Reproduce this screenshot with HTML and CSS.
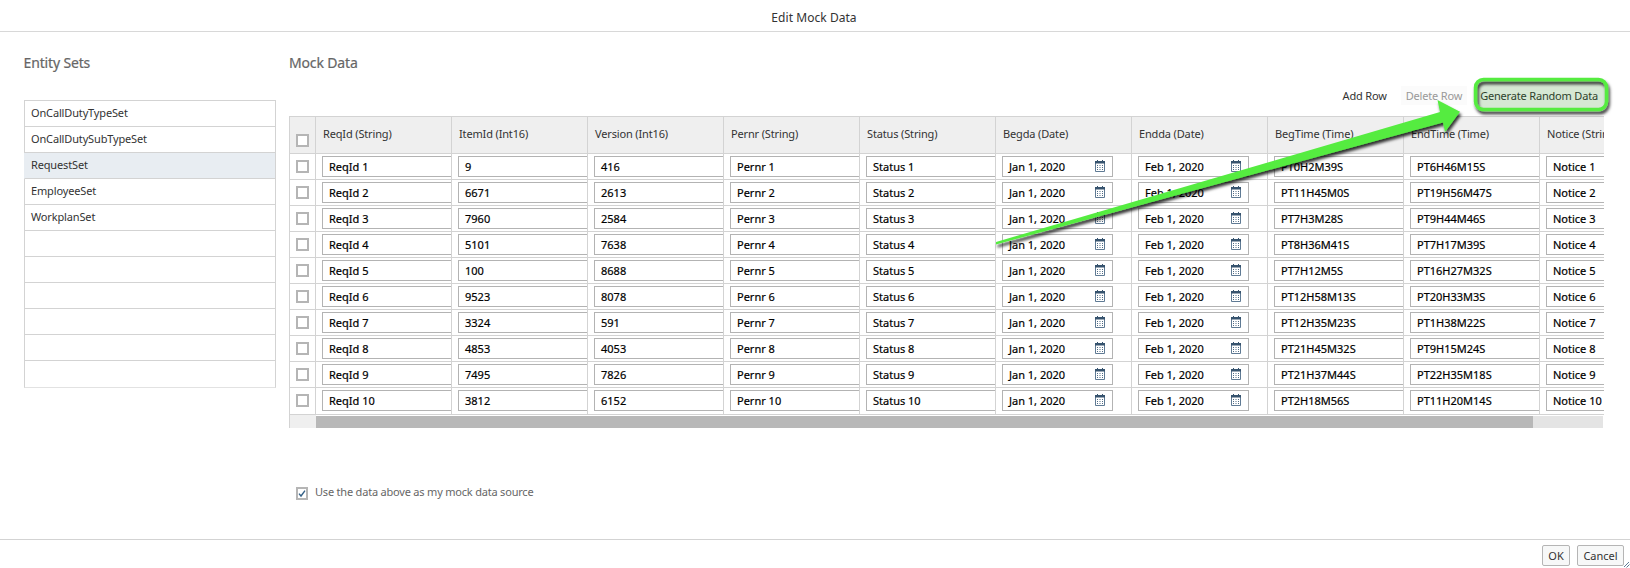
FILE: index.html
```html
<!DOCTYPE html>
<html lang="en">
<head>
<meta charset="utf-8">
<title>Edit Mock Data</title>
<link rel="stylesheet" href="styles.css">
</head>
<body>
<div class="dialog">
  <header class="titlebar"><h1 class="title">Edit Mock Data</h1></header>
  <main class="content">
    <section class="entities">
      <h2 class="heading">Entity Sets</h2>
      <ul class="list">
        <li>OnCallDutyTypeSet</li>
        <li>OnCallDutySubTypeSet</li>
        <li class="selected">RequestSet</li>
        <li>EmployeeSet</li>
        <li>WorkplanSet</li>
        <li></li><li></li><li></li><li></li><li></li><li></li>
      </ul>
    </section>
    <section class="mock">
      <h2 class="heading">Mock Data</h2>
      <div class="toolbar">
        <span class="tool">Add Row</span>
        <span class="tool disabled">Delete Row</span>
        <span class="tool generate">Generate Random Data</span>
      </div>
      <div class="table" id="table"></div>
      <div class="scroll"><div class="thumb"></div></div>
      <div class="source">
        <span class="check checked"><svg viewBox="0 0 8 9" width="8" height="9"><path d="M1 4.6 3 7 7 1.6" fill="none" stroke="#346187" stroke-width="1.4"/></svg></span>
        <span class="source-label">Use the data above as my mock data source</span>
      </div>
    </section>
  </main>
  <footer class="footer">
    <span class="button ok">OK</span>
    <span class="button cancel">Cancel</span>
  </footer>
  <svg class="grip" width="6" height="6" viewBox="0 0 6 6"><path d="M0 5 5 0M2.500 5.500 5.500 2.500" stroke="#5f7a94" stroke-width="1" fill="none"/></svg>
  <svg class="annotation" width="1630" height="568" viewBox="0 0 1630 568">
    <defs><filter id="shadow" x="-10%" y="-20%" width="120%" height="150%"><feDropShadow dx="1.500" dy="3" stdDeviation="1.8" flood-color="#000" flood-opacity=".8"/></filter></defs>
    <path d="M996 242 1440 112 1437.500 100 1460 111.700 1445 132 1443 122.500 996 244.500Z" fill="#55ec41" filter="url(#shadow)"/>
    <rect x="1475.500" y="79.500" width="131" height="30" rx="8" fill="#1b7d12" fill-opacity=".18"/>
    <rect x="1475.500" y="79.500" width="131" height="30" rx="8" fill="none" stroke="#55ec41" stroke-width="3.500" filter="url(#shadow)"/>
  </svg>
</div>
<script src="table.js"></script>
</body>
</html>
```
FILE: styles.css
```css
* { box-sizing: border-box; }
body { margin: 0; background: #fff; font-family: "Noto Sans", sans-serif; font-size: 11px; letter-spacing: -.15px; color: #333; }
.dialog { position: relative; width: 1630px; height: 568px; overflow: hidden; display: flex; flex-direction: column; }
.titlebar { height: 32px; border-bottom: 1px solid #d8d8d8; display: flex; justify-content: center; padding-top: 1px; padding-right: 2px; }
.title { margin: 0; font-size: 12px; line-height: 34px; font-weight: 400; letter-spacing: 0.05px; color: #333; }
.content { height: 507px; padding: 20px 26px 0 24px; display: flex; }
.entities { width: 252px; margin-right: 13px; }
.heading { margin: 0; height: 48px; padding-top: 1px; font-size: 14px; line-height: 20px; font-weight: 400; color: #666; -webkit-text-stroke: .2px; }
.list { margin: 0; padding: 0; list-style: none; border-top: 1px solid #d3d3d3; }
.list li { height: 26px; padding-left: 6px; line-height: 23px; border: solid #d3d3d3; border-width: 0 1px 1px; }
.list li:last-child { height: 27px; border-bottom-color: #e2e2e2; }
.list .selected { background: #e8edf2; border-left-color: #e8edf2; }
.entities .heading { text-indent: -.5px; }
.mock { width: 1315px; }
.toolbar { margin-top: -12px; height: 28px; padding-bottom: 11px; display: flex; justify-content: flex-end; align-items: flex-end; }
.tool { line-height: 19px; white-space: nowrap; letter-spacing: -.18px; }
.disabled { color: #999; background: #fbfbfb; padding: 0 5px; margin: 0 13px 0 14px; }
.generate { margin-right: 6px; }
.table { width: 1315px; border-top: 1px solid #d3d3d3; overflow: hidden; }
.row { display: grid; grid-template-columns: 27px repeat(10, 136px); height: 26px; }
.row.head { height: 37px; background: #efefef; }
.row:last-child { height: 27px; }
.cell { border: solid #d3d3d3; border-width: 0 1px 1px 0; padding: 2px 0 0 6px; overflow: hidden; }
.cell.select { border-left-width: 1px; padding: 6px 0 0 6px; }
.head .select { padding-top: 17px; }
.head .cell:not(.select) { line-height: 34px; padding: 0 0 0 7px; }
.check { display: block; width: 13px; height: 13px; border: 2px solid #b5b5b5; background: #fff; }
.field { width: 150px; height: 21px; border: 1px solid #b3b3b3; padding: 0 6px; line-height: 20px; letter-spacing: 0; color: #000; white-space: nowrap; -webkit-text-stroke: .2px; }
.field.date { width: 111px; padding-right: 7px; display: flex; justify-content: space-between; }
.field svg { margin-top: 3px; }
.scroll { height: 13px; width: 1314px; padding: 1px 0 0 26px; border-left: 1px solid #d3d3d3; background: linear-gradient(90deg, #efefef 26px, #fff 26px); }
.thumb { width: 1287px; height: 12px; background: linear-gradient(90deg, #b8b8b8 1217px, #e4e4e4 1217px); }
.source { display: flex; margin: 59px 0 0 7px; }
.checked { width: 12px; line-height: 0; }
.source-label { margin-left: 7px; line-height: 10px; letter-spacing: -.2px; color: #666; }
.footer { height: 29px; border-top: 1px solid #d3d3d3; padding: 5px 6px 0 0; display: flex; justify-content: flex-end; gap: 7px; }
.button { height: 21px; border: 1px solid #b5b5b5; border-radius: 2px; background: #f7f8f8; text-align: center; line-height: 19px; letter-spacing: 0; }
.ok { width: 28px; }
.cancel { width: 47px; }
.grip { position: absolute; right: 0; bottom: 0; }
.annotation { position: absolute; left: 0; top: 0; pointer-events: none; }
```
FILE: table.js
```js
const columns = ['ReqId (String)', 'ItemId (Int16)', 'Version (Int16)', 'Pernr (String)', 'Status (String)', 'Begda (Date)', 'Endda (Date)', 'BegTime (Time)', 'EndTime (Time)', 'Notice (String)'];
const items = [9, 6671, 7960, 5101, 100, 9523, 3324, 4853, 7495, 3812];
const versions = [416, 2613, 2584, 7638, 8688, 8078, 591, 4053, 7826, 6152];
const begins = ['PT0H2M39S', 'PT11H45M0S', 'PT7H3M28S', 'PT8H36M41S', 'PT7H12M5S', 'PT12H58M13S', 'PT12H35M23S', 'PT21H45M32S', 'PT21H37M44S', 'PT2H18M56S'];
const ends = ['PT6H46M15S', 'PT19H56M47S', 'PT9H44M46S', 'PT7H17M39S', 'PT16H27M32S', 'PT20H33M3S', 'PT1H38M22S', 'PT9H15M24S', 'PT22H35M18S', 'PT11H20M14S'];
const calendar = '<svg width="10" height="12" viewBox="0 0 10 12"><path d="M.5 1.500h9v10h-9z" fill="#fff" stroke="#5f7a94"/><path d="M0 1h10v2.500H0zM2 0h1v2H2zM7 0h1v2H7z" fill="#36536e"/><path d="M2 5.500h6M2 7.500h6M2 9.500h6" stroke="#4f6b84" stroke-width="1" stroke-dasharray="1 1.500"/></svg>';
const select = '<div class="cell select"><span class="check"></span></div>';
let html = '<div class="row head">' + select + columns.map(c => `<div class="cell">${c}</div>`).join('') + '</div>';
for (let i = 0; i < 10; i++) {
  const n = i + 1;
  const values = ['ReqId ' + n, items[i], versions[i], 'Pernr ' + n, 'Status ' + n, 'Jan 1, 2020', 'Feb 1, 2020', begins[i], ends[i], 'Notice ' + n];
  html += '<div class="row">' + select + values.map((v, c) => {
    const date = c === 5 || c === 6;
    return `<div class="cell"><div class="field${date ? ' date' : ''}"><span>${v}</span>${date ? calendar : ''}</div></div>`;
  }).join('') + '</div>';
}
document.getElementById('table').innerHTML = html;
```
